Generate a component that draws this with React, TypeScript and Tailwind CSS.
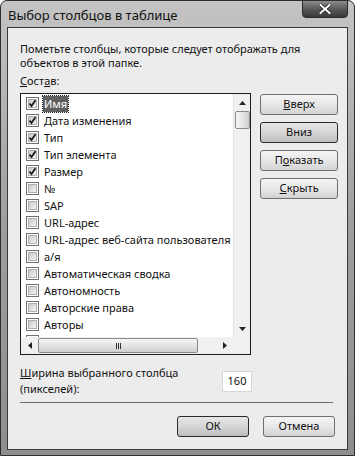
import React from 'react';

const items: { label: string; checked: boolean }[] = [
  { label: 'Имя', checked: true },
  { label: 'Дата изменения', checked: true },
  { label: 'Тип', checked: true },
  { label: 'Тип элемента', checked: true },
  { label: 'Размер', checked: true },
  { label: '№', checked: false },
  { label: 'SAP', checked: false },
  { label: 'URL-адрес', checked: false },
  { label: 'URL-адрес веб-сайта пользователя', checked: false },
  { label: 'а/я', checked: false },
  { label: 'Автоматическая сводка', checked: false },
  { label: 'Автономность', checked: false },
  { label: 'Авторские права', checked: false },
  { label: 'Авторы', checked: false },
  { label: '', checked: false },
];

const CheckBox = ({ checked }: { checked: boolean }) => (
  <div className="w-[13px] h-[13px] shrink-0 border border-[#707070] bg-white p-[1px]">
    <div className="w-full h-full bg-gradient-to-br from-[#c8c8c8] to-[#f4f4f4] border border-[#b0b0b0] relative">
      {checked && (
        <svg viewBox="0 0 9 9" className="absolute -left-[1px] -top-[1px] w-[9px] h-[9px]">
          <path d="M1.5 4.5 L3.5 7 L7.5 1.2" fill="none" stroke="#1a1a1a" strokeWidth="1.8" />
        </svg>
      )}
    </div>
  </div>
);

const Button = ({ children, primary }: { children: React.ReactNode; primary?: boolean }) => (
  <div
    className={
      'h-[21px] flex items-center justify-center rounded-[3px] border text-[#111] ' +
      (primary
        ? 'border-[#2a2a2a] bg-gradient-to-b from-[#e6e6e6] via-[#d6d6d6] to-[#bdbdbd]'
        : 'border-[#707070] bg-gradient-to-b from-[#f4f4f4] via-[#e8e8e8] to-[#d2d2d2]')
    }
  >
    {children}
  </div>
);

const Tri = ({ dir }: { dir: 'up' | 'down' | 'left' | 'right' }) => {
  const d = {
    up: 'M0 4 L3.5 0 L7 4 Z',
    down: 'M0 0 L7 0 L3.5 4 Z',
    left: 'M4 0 L4 7 L0 3.5 Z',
    right: 'M0 0 L4 3.5 L0 7 Z',
  }[dir];
  const vertical = dir === 'up' || dir === 'down';
  return (
    <svg viewBox={vertical ? '0 0 7 4' : '0 0 4 7'} className={vertical ? 'w-[7px] h-[4px]' : 'w-[4px] h-[7px]'}>
      <path d={d} fill="#222" />
    </svg>
  );
};

export default function App() {
  return (
    <div className="w-[355px] h-[456px] flex flex-col rounded-t-[7px] border border-[#2e2e2e] bg-gradient-to-b from-[#c4c4c4] via-[#9e9e9e] to-[#8e8e8e] font-['Noto_Sans',sans-serif] text-[11px] text-[#111] px-[6px] pb-[5px] overflow-hidden">
      <div className="h-[26px] flex items-start justify-between shrink-0">
        <div className="pt-[5px] pl-[1px] text-[13px] leading-[18px] text-[#111]">Выбор столбцов в таблице</div>
        <div className="w-[46px] h-[18px] mt-[-1px] rounded-b-[4px] border border-[#2a2a2a] bg-gradient-to-b from-[#8c8c8c] via-[#5a5a5a] to-[#3a3a3a] flex items-center justify-center">
          <svg viewBox="0 0 12 10" className="w-[12px] h-[10px]">
            <path d="M1.5 1 L10.5 9 M10.5 1 L1.5 9" stroke="#222" strokeWidth="3.6" strokeLinecap="square" />
            <path d="M1.5 1 L10.5 9 M10.5 1 L1.5 9" stroke="#fff" strokeWidth="2" strokeLinecap="square" />
          </svg>
        </div>
      </div>
      <div className="flex-1 bg-[#ececec] border border-[#3a3a3a] flex flex-col pl-[12px] pr-[9px]">
        <div className="pt-[14px] leading-[14px]">
          Пометьте столбцы, которые следует отображать для объектов в этой папке.
        </div>
        <div className="mt-[4px] leading-[14px]">
          <span className="underline">С</span>ост<span className="underline">а</span>в:
        </div>
        <div className="mt-[5px] flex gap-[9px]">
          <div className="w-[232px] h-[262px] border border-[#1e1e1e] bg-white flex flex-col">
            <div className="flex flex-1 min-h-0">
              <div className="flex-1 overflow-hidden pt-[1px]">
                {items.map((it, i) => (
                  <div key={i} className="h-[17px] flex items-center pl-[5px] gap-[4px] whitespace-nowrap">
                    <CheckBox checked={it.checked} />
                    {it.label && (
                      <span
                        className={
                          'px-[1px] leading-[16px] ' +
                          (i === 0 ? 'bg-[#5f5f5f] text-white outline-1 outline-dotted outline-[#222]' : '')
                        }
                      >
                        {it.label}
                      </span>
                    )}
                  </div>
                ))}
              </div>
              <div className="w-[17px] bg-[#f0f0f0] border-l border-[#e2e2e2] flex flex-col items-center">
                <div className="h-[17px] flex items-center justify-center">
                  <Tri dir="up" />
                </div>
                <div className="w-[15px] h-[18px] rounded-[2px] border border-[#8a8a8a] bg-gradient-to-r from-[#f6f6f6] via-[#e4e4e4] to-[#cfcfcf]" />
                <div className="flex-1" />
                <div className="h-[17px] flex items-center justify-center">
                  <Tri dir="down" />
                </div>
              </div>
            </div>
            <div className="h-[17px] flex bg-[#f0f0f0]">
              <div className="flex-1 flex items-center">
                <div className="w-[17px] flex justify-center">
                  <Tri dir="left" />
                </div>
                <div className="w-[160px] h-[15px] rounded-[2px] border border-[#8a8a8a] bg-gradient-to-b from-[#f6f6f6] via-[#e4e4e4] to-[#cfcfcf] flex items-center justify-center">
                  <div className="flex gap-[1px]">
                    <div className="w-[1px] h-[6px] bg-[#333]" />
                    <div className="w-[1px] h-[6px] bg-[#333]" />
                    <div className="w-[1px] h-[6px] bg-[#333]" />
                  </div>
                </div>
                <div className="flex-1 flex justify-end pr-[6px]">
                  <Tri dir="right" />
                </div>
              </div>
              <div className="w-[17px] bg-[#f0f0f0]" />
            </div>
          </div>
          <div className="w-[78px] flex flex-col gap-[7px] pt-[1px]">
            <Button>
              <span><span className="underline">В</span>верх</span>
            </Button>
            <Button primary>Вниз</Button>
            <Button>
              <span>П<span className="underline">о</span>казать</span>
            </Button>
            <Button>
              <span><span className="underline">С</span>крыть</span>
            </Button>
          </div>
        </div>
        <div className="mt-[10px] flex items-center w-[232px] justify-between">
          <div className="leading-[16px]">
            <span className="underline">Ш</span>ирина выбранного столбца
            <br />
            (пикселей):
          </div>
          <div className="w-[30px] h-[21px] bg-white border border-[#d8d8d8] flex items-center justify-center">160</div>
        </div>
        <div className="mt-[5px] h-[1px] bg-[#6e6e6e] mr-[5px]" />
        <div className="mt-[13px] flex justify-end gap-[14px] pr-[3px]">
          <div className="w-[72px]">
            <Button primary>ОК</Button>
          </div>
          <div className="w-[72px]">
            <Button>Отмена</Button>
          </div>
        </div>
      </div>
    </div>
  );
}
